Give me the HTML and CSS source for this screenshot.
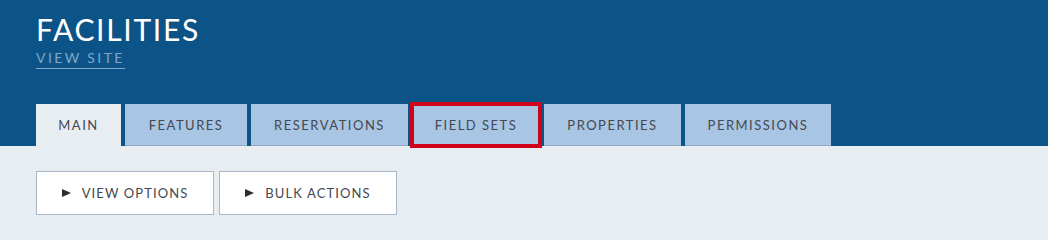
FILE: index.html
```html
<!DOCTYPE html>
<html lang="en">
<head>
<meta charset="utf-8">
<title>Facilities</title>
<link rel="stylesheet" href="styles.css">
</head>
<body>
<header class="site-header">
  <h1 class="page-title">FACILITIES</h1>
  <a class="view-site" href="#">VIEW SITE</a>
  <nav class="tabs">
    <a class="tab tab-active" href="#">MAIN</a>
    <a class="tab" href="#">FEATURES</a>
    <a class="tab" href="#">RESERVATIONS</a>
    <a class="tab tab-highlight" href="#">FIELD SETS</a>
    <a class="tab" href="#">PROPERTIES</a>
    <a class="tab" href="#">PERMISSIONS</a>
  </nav>
</header>
<main class="content">
  <div class="toolbar">
    <button class="tool-btn"><span class="caret"></span>VIEW OPTIONS</button>
    <button class="tool-btn"><span class="caret"></span>BULK ACTIONS</button>
  </div>
</main>
</body>
</html>
```

FILE: styles.css
```css
* { box-sizing: border-box; }
html, body { margin: 0; padding: 0; }
body {
  background: #e8edf2;
  font-family: Lato, "Open Sans", sans-serif;
  color: #444852;
}
.site-header {
  background: #0c5487;
  padding: 11px 0 0 36px;
  display: flex;
  flex-direction: column;
  align-items: flex-start;
}
.page-title {
  margin: 0;
  font-size: 30px;
  font-weight: 400;
  line-height: 37px;
  color: #ffffff;
  letter-spacing: 1.7px;
}
.view-site {
  margin-top: 1px;
  font-size: 14px;
  line-height: 18px;
  letter-spacing: 2.4px;
  color: #7ea6cb;
  text-decoration: none;
  border-bottom: 1px solid #7ea6cb;
  padding-bottom: 1px;
}
.tabs {
  display: flex;
  gap: 4px;
  margin-top: 35px;
}
.tab {
  height: 42px;
  display: flex;
  align-items: center;
  justify-content: center;
  background: #a8c5e3;
  border-bottom: 1px solid #8ea9c6;
  font-size: 13px;
  letter-spacing: 1.5px;
  color: #444852;
  text-decoration: none;
}
.tab:nth-child(1) { width: 85px; }
.tab:nth-child(2) { width: 122px; }
.tab:nth-child(3) { width: 157px; }
.tab:nth-child(4) { width: 128px; }
.tab:nth-child(5) { width: 137px; }
.tab:nth-child(6) { width: 146px; }
.tab-active {
  background: #e8edf2;
  border-bottom-color: #e8edf2;
}
.tab-highlight {
  outline: 4px solid #d0021b;
  outline-offset: -2px;
}
.content {
  padding: 25px 36px 19px;
}
.toolbar {
  display: flex;
  gap: 5px;
}
.tool-btn {
  width: 178px;
  height: 44px;
  background: #ffffff;
  border: 1px solid #a9b8c8;
  display: flex;
  align-items: center;
  justify-content: center;
  gap: 11px;
  font-family: Lato, "Open Sans", sans-serif;
  font-size: 13px;
  letter-spacing: 1.1px;
  color: #444852;
  padding: 0;
}
.caret {
  width: 0;
  height: 0;
  border-top: 4.5px solid transparent;
  border-bottom: 4.5px solid transparent;
  border-left: 9px solid #2a2d35;
}
```
